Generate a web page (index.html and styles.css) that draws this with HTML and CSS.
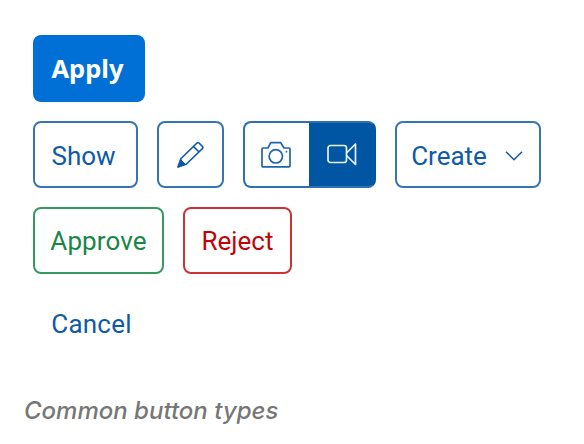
FILE: index.html
```html
<!DOCTYPE html>
<html lang="en">
<head>
<meta charset="utf-8">
<title>Common button types</title>
<link rel="stylesheet" href="styles.css">
</head>
<body>
<figure class="figure">
  <div class="row"><button class="btn emphasized">Apply</button></div>
  <div class="row">
    <button class="btn show">Show</button>
    <button class="btn icon" aria-label="Edit"><svg viewBox="0 0 32 32" width="32" height="32"><path d="M3 28l3-8.500L22 4q1-1 2 0l3.500 3.500q1 1 0 2L11.500 25zM18.500 7.500l5.500 5.500"/><path class="fill" d="M3 28l2.500-7.500 5 5z"/></svg></button>
    <div class="segmented">
      <button class="segment" aria-label="Photo"><svg viewBox="0 0 32 32" width="32" height="32"><path d="M3 9H8l2.700-5.300h10L24 9h5q1 0 1 1v16.800q0 1-1 1H3q-1 0-1-1V10q0-1 1-1z"/><circle cx="15.800" cy="17.300" r="6.700"/><circle class="fill dot" cx="26.500" cy="12.700" r=".9"/></svg></button>
      <button class="segment selected" aria-label="Video"><svg viewBox="0 0 32 32" width="32" height="32"><rect x="2" y="6.500" width="18.500" height="17" rx="2.500"/><path d="M20.500 14l9-9v20.500l-9-9"/></svg></button>
    </div>
    <button class="btn menu"><span>Create</span><svg class="chevron" viewBox="0 0 18 10" width="18" height="10"><path d="M1 .8l8 8 8-8"/></svg></button>
  </div>
  <div class="row"><button class="btn accept">Approve</button><button class="btn reject">Reject</button></div>
  <div class="row"><button class="btn ghost">Cancel</button></div>
  <figcaption class="caption">Common button types</figcaption>
</figure>
</body>
</html>
```
FILE: styles.css
```css
*{box-sizing:border-box}
body{margin:0;background:#fff}
.figure{margin:0;padding:35px 0 0 33px}
.row{display:flex;gap:19px;margin-bottom:19px}
.btn{height:67px;padding:1px 0 0;border:2px solid #3575b5;border-radius:8px;background:#fff;color:#0f5aa6;font:26px Roboto,sans-serif;display:flex;align-items:center;justify-content:center}
.emphasized{width:112px;padding:0 3px 2px 0;background:#0070d6;border-color:#0070d6;color:#fff;font:700 25.500px "Noto Sans",sans-serif}
.show{width:105px;padding:2px 4px 0 0}
.icon{width:67px;padding:0}
svg{fill:none;stroke:currentColor;stroke-width:1.7;stroke-linejoin:round}
.fill{fill:currentColor;stroke-width:1}
.dot{stroke:none}
.segmented{display:flex;width:133px;height:67px;border:2px solid #2f70b2;border-right-color:#0056a3;border-radius:8px;overflow:hidden;background:#0056a3}
.segment{flex:0 0 64px;border:0;padding:0 2px 0 0;background:#fff;color:#1e65ae;display:flex;align-items:center;justify-content:center}
.selected{flex:1;padding-right:0;background:#0056a3;color:#e8f1fa}
.menu{width:146px;gap:18px;padding:3px 2px 0 0}
.chevron{stroke-width:1.5}
.accept{width:131px;color:#188646;border-color:#369a60;letter-spacing:.1px}
.reject{width:109px;color:#c00408;border-color:#cb3437}
.ghost{width:117px;border-color:transparent;height:60px;letter-spacing:.2px}
.caption{margin:41px 0 0 -9px;font:italic 500 24px/34px Inter,sans-serif;color:#777}
```
